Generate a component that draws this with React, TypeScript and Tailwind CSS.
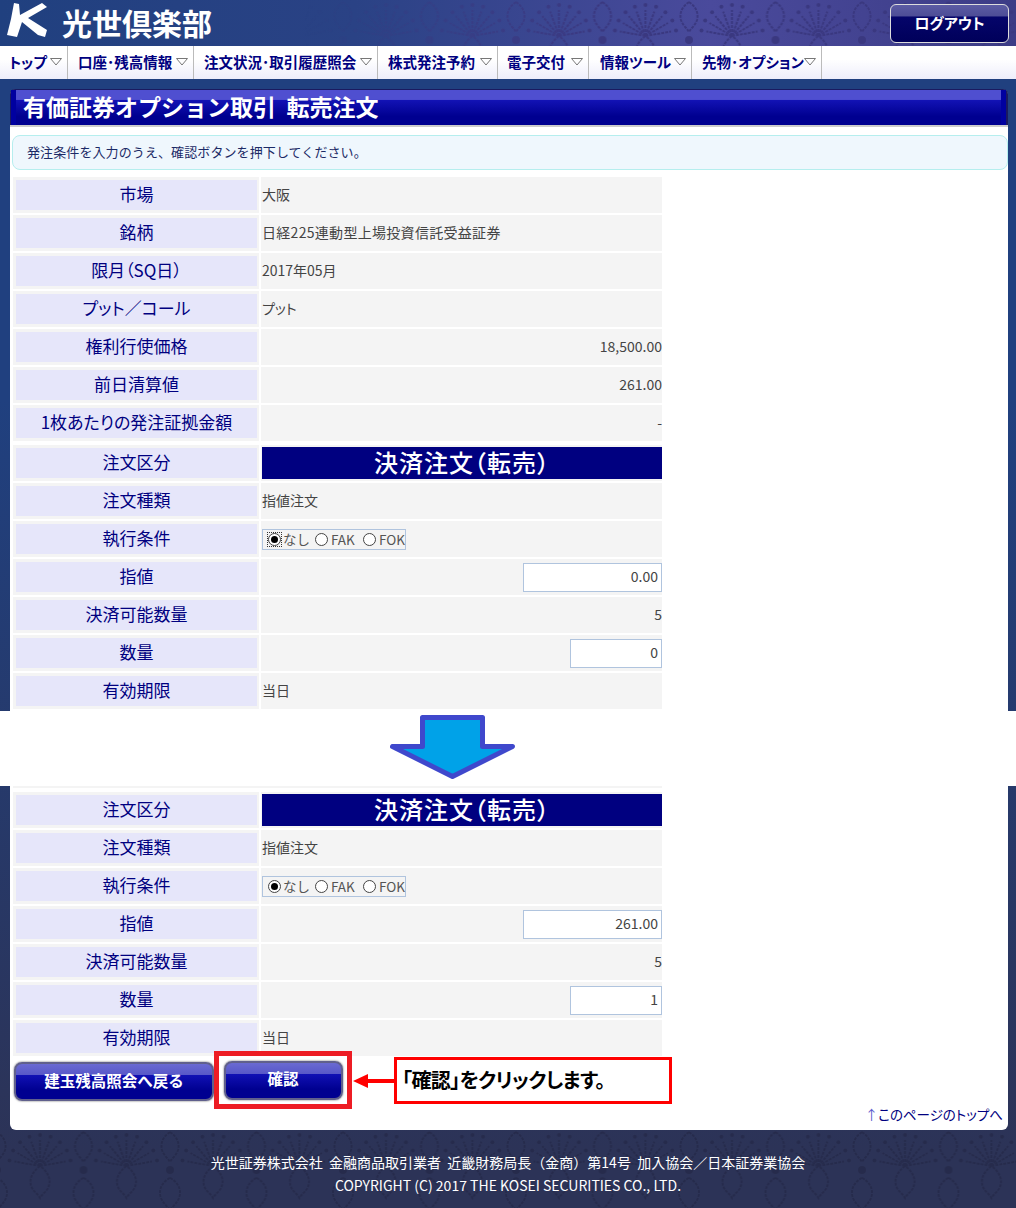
const font = { fontFamily: '"Noto Sans CJK JP", "Noto Sans", sans-serif' };

const navItems = [
  { label: "トップ", box: "w-[67px] pl-[8px]" },
  { label: "口座･残高情報", box: "w-[126px] pl-[10px]" },
  { label: "注文状況･取引履歴照会", box: "w-[184px] pl-[10px]" },
  { label: "株式発注予約", box: "w-[120px] pl-[10px]" },
  { label: "電子交付", box: "w-[91px] pl-[9px]" },
  { label: "情報ツール", box: "w-[103px] pl-[11px]" },
  { label: "先物･オプション", box: "w-[130px] pl-[10px]" },
];

// fan of the wallpaper, spokes radiate from the base of the fan
const spokes = [-80, -60, -40, -20, 0, 20, 40, 60, 80].map((deg) => {
  const r = (deg * Math.PI) / 180;
  return { x: 26 * Math.sin(r), y: 26 * Math.cos(r), dx: 31 * Math.sin(r), dy: 31 * Math.cos(r) };
});

function Damask({ id, color }: { id: string; color: string }) {
  return (
    <svg className="absolute inset-0 w-full h-full" aria-hidden="true">
      <defs>
        <pattern id={id} width="86.5" height="92" patternUnits="userSpaceOnUse" x="-3" y="-8">
          <g fill="none" stroke={color} strokeWidth="2" strokeDasharray="3 1">
            {spokes.map((s) => (
              <path key={s.dx} d={`M43 44 L${43 + s.x} ${44 - s.y}`} />
            ))}
            <path d="M43 44c-8 6-12 14-8 22 2 4 6 6 8 10 2-4 6-6 8-10 4-8 0-16-8-22z" />
            <path d="M0 10c6 4 10 10 8 18-2 6-6 8-8 12M86.5 10c-6 4-10 10-8 18 2 6 6 8 8 12" />
            <path d="M0 56c8 4 12 12 9 20-2 5-6 8-9 12M86.5 56c-8 4-12 12-9 20 2 5 6 8 9 12" />
          </g>
          <g fill={color}>
            {spokes.map((s) => (
              <circle key={s.dy} cx={43 + s.dx} cy={44 - s.dy} r="2" />
            ))}
            <circle cx="0" cy="48" r="4" />
            <circle cx="86.5" cy="48" r="4" />
          </g>
        </pattern>
      </defs>
      <rect width="100%" height="100%" fill={`url(#${id})`} />
    </svg>
  );
}

function Row({ label, children, right, className = "" }: { label: string; children: React.ReactNode; right?: boolean; className?: string }) {
  return (
    <div className={`flex h-[36px] w-[649px] ${className}`}>
      <div className="w-[246px] bg-[#f4f4f4] flex items-center pl-[3px] pr-[2px]">
        <div className="w-full h-[30px] pb-[2px] bg-[#e6e6fa] flex items-center justify-center text-[17px] text-[#000080] [font-feature-settings:'palt']">{label}</div>
      </div>
      <div className={`ml-[2px] w-[401px] bg-[#f4f4f4] flex items-center text-[14px] text-[#444] ${right ? "justify-end" : ""}`}>
        {children}
      </div>
    </div>
  );
}

function Radio({ checked, focus }: { checked?: boolean; focus?: boolean }) {
  return (
    <span className={`w-[15px] h-[15px] flex items-center justify-center ${focus ? "outline-1 outline-dotted outline-[#333] -outline-offset-1" : ""}`}>
      <span className="w-[13px] h-[13px] rounded-full border border-[#444] bg-white flex items-center justify-center">
        {checked && <span className="w-[7px] h-[7px] rounded-full bg-black" />}
      </span>
    </span>
  );
}

function RadioGroup({ focus }: { focus?: boolean }) {
  return (
    <div className="ml-[1px] w-[144px] h-[21px] border border-[#b0c4de] flex items-center pl-[4px] text-[13.5px] text-[#555] whitespace-nowrap">
      <Radio checked focus={focus} />
      <span className="ml-[1px] w-[31px]">なし</span>
      <Radio />
      <span className="ml-[2px] w-[31px]">FAK</span>
      <Radio />
      <span className="ml-[2px]">FOK</span>
    </div>
  );
}

function TextBox({ value, width }: { value: string; width: string }) {
  return (
    <input
      readOnly
      value={value}
      className={`${width} h-[29px] pb-[2px] border border-[#b0c4de] bg-white text-right text-[14px] text-[#444] pr-[3px] outline-none`}
      style={font}
    />
  );
}

function OrderBand() {
  return (
    <div className="w-[400px] h-[32px] pb-[2px] bg-[#000080] flex items-center justify-center text-white font-medium text-[24px] ml-[1px] leading-none tracking-[1px] [font-feature-settings:'palt']">
      決済注文（転売）
    </div>
  );
}

function Val({ children, className = "" }: { children: React.ReactNode; className?: string }) {
  return <span className={`pb-[2px] ${className}`}>{children}</span>;
}

function OrderRows({ limit, qty, focus }: { limit: string; qty: string; focus?: boolean }) {
  return (
    <>
      <Row label="注文区分" className="mb-[2px]"><OrderBand /></Row>
      <Row label="注文種類" className="mb-[2px]"><Val className="ml-[1px]">指値注文</Val></Row>
      <Row label="執行条件" className="mb-[2px]"><RadioGroup focus={focus} /></Row>
      <Row label="指値" right className="mb-[2px]"><TextBox value={limit} width="w-[139px]" /></Row>
      <Row label="決済可能数量" right className="mb-[2px]"><Val>5</Val></Row>
      <Row label="数量" right className="mb-[2px]"><TextBox value={qty} width="w-[92px]" /></Row>
      <Row label="有効期限"><Val className="ml-[1px]">当日</Val></Row>
    </>
  );
}

function BlueButton({ label, width }: { label: string; width: string }) {
  return (
    <button
      type="button"
      className={`${width} h-[39px] pb-[2px] rounded-[8px] border-2 border-[#60608c] shadow-[0_0_2px_#555] text-white font-bold text-[15.5px] bg-[linear-gradient(#6a6ad2_0,#5858c8_30%,#1010b4_32%,#000090_75%,#000090_100%)]`}
    >
      {label}
    </button>
  );
}

export default function App() {
  return (
    <div className="w-[1016px] h-[1208px] overflow-hidden flex flex-col bg-[linear-gradient(#20407f_0,#20407f_400px,#2c3357_1150px)]" style={font}>
      <header className="relative h-[46px] shrink-0 overflow-hidden bg-[linear-gradient(90deg,#20407f_0,#2a4285_35%,#4a4a9c_70%,#3c3c86_100%)]">
        <div className="absolute inset-0 [mask-image:linear-gradient(90deg,transparent_30%,#000_60%)]">
          <Damask id="top" color="#3a3880" />
        </div>
        <div className="relative flex items-center h-full pl-[7px] pr-[7px]">
          <svg width="40" height="34" viewBox="0 0 40 34" className="shrink-0 mb-[6px]" aria-hidden="true">
            <path fill="#fff" d="M7 0 12 1 13 12 35 0 40 4 21 15 40 27 38 34 31 32 15 19 10 34 0 32 4 16Z" />
          </svg>
          <span className="ml-[15px] mb-[2px] text-white font-bold text-[30px] leading-none whitespace-nowrap">光世倶楽部</span>
          <button
            type="button"
            className="ml-auto w-[119px] h-[39px] rounded-[6px] border border-[#ddd] text-white font-bold text-[15px] bg-[linear-gradient(#5c5ca4_0,#4d4d96_30%,#05056a_32%,#00005a_100%)] [font-feature-settings:'palt']"
          >
            ログアウト
          </button>
        </div>
      </header>

      <nav className="h-[33px] shrink-0 flex bg-[linear-gradient(#ffffff_0,#ffffff_40%,#eeeefb_100%)] pl-[1px]">
        {navItems.map((item) => (
          <div key={item.label} className={`flex items-center h-full border-r border-[#bbbbbb] pr-[5px] pb-[1px] ${item.box}`}>
            <span className="font-bold text-[14.5px] text-[#000080] whitespace-nowrap [font-feature-settings:'palt']">{item.label}</span>
            <svg width="12" height="8" viewBox="0 0 12 8" className="ml-auto" aria-hidden="true">
              <path d="M0.5 0.5H11.5L6 7Z" fill="none" stroke="#777" />
            </svg>
          </div>
        ))}
      </nav>

      <main className="mt-[10px] mx-[10px] w-[998px] h-[622px] shrink-0 bg-white rounded-t-[6px]">
        <div className="h-[38px] rounded-t-[5px] border-b-2 border-[#cccccc] bg-[#1a1a60] pt-[1px] pl-[1px] pr-[2px]">
          <div className="relative h-[35px] flex items-center pl-[12px] pb-[2px] bg-[linear-gradient(#4f4fd0_0,#4f4fd0_27%,#1212b4_30%,#000090_75%,#000090_100%)]">
            <div className="absolute left-0 inset-y-0 w-[5px] bg-[#0000a0]" />
            <div className="absolute right-0 inset-y-0 w-[5px] bg-[#0000a0]" />
            <h1 className="relative text-white font-bold text-[23px] whitespace-nowrap">有価証券オプション取引&nbsp;&nbsp;転売注文</h1>
          </div>
        </div>
        <div className="mt-[8px] ml-[2px] h-[35px] pb-[2px] rounded-[8px] border border-[#b5eeee] bg-[#eff7fd] flex items-center pl-[14px] text-[13px] tracking-[0.1px] text-[#1b2a66]">
          発注条件を入力のうえ、確認ボタンを押下してください。
        </div>
        <div className="mt-[7px] ml-[3px] flex flex-col">
          <Row label="市場" className="mb-[2px]"><Val className="ml-[1px]">大阪</Val></Row>
          <Row label="銘柄" className="mb-[2px]"><Val className="ml-[1px] tracking-[0.3px]">日経225連動型上場投資信託受益証券</Val></Row>
          <Row label="限月（SQ日）" className="mb-[2px]"><Val className="ml-[1px]">2017年05月</Val></Row>
          <Row label="プット／コール" className="mb-[2px]"><Val className="ml-[1px] [font-feature-settings:'palt']">プット</Val></Row>
          <Row label="権利行使価格" right className="mb-[2px]"><Val>18,500.00</Val></Row>
          <Row label="前日清算値" right className="mb-[2px]"><Val>261.00</Val></Row>
          <Row label="1枚あたりの発注証拠金額" right className="mb-[4px]"><Val>-</Val></Row>
          <OrderRows limit="0.00" qty="0" focus />
        </div>
      </main>

      <section className="h-[75px] shrink-0 bg-white flex justify-center">
        <svg width="126" height="66" viewBox="0 0 126 66" className="mt-[3px] mr-[110px] shrink-0" aria-hidden="true">
          <path
            d="M32.5 3.5H92.5V32.5H122.5L62.5 62.5L2.5 32.5H32.5Z"
            fill="#00a2e8"
            stroke="#3f48cc"
            strokeWidth="5"
            strokeLinejoin="round"
          />
        </svg>
      </section>

      <main className="mx-[10px] w-[998px] h-[344px] shrink-0 bg-white rounded-b-[6px]">
        <div className="ml-[3px] w-[649px] h-[2px] bg-[#f4f4f4]" />
        <div className="mt-[4px] ml-[3px] flex flex-col">
          <OrderRows limit="261.00" qty="1" />
        </div>
        <div className="flex items-start ml-[4px] -mt-[5px]">
          <div className="mt-[11px]"><BlueButton label="建玉残高照会へ戻る" width="w-[200px]" /></div>
          <div className="border-[5px] border-[#ed1c24] w-[138px] h-[58px] flex items-center justify-center shrink-0">
            <BlueButton label="確認" width="w-[119px]" />
          </div>
          <svg width="42" height="16" viewBox="0 0 42 16" className="mt-[22px] shrink-0" aria-hidden="true">
            <path d="M1 8 16 1V6H42V10H16V15Z" fill="#ff0000" />
          </svg>
          <div className="mt-[6px] w-[278px] h-[47px] pb-[2px] border-[3px] border-[#ff0000] bg-white flex items-center pl-[5px] text-[20px] font-bold text-black tracking-[-0.6px] whitespace-nowrap [font-feature-settings:'palt']">
            「確認」をクリックします。
          </div>
        </div>
        <div className="flex justify-end pr-[5px] mt-[-1px] text-[13.5px] text-[#000080] leading-none [font-feature-settings:'palt']">
          <span className="text-[#5a5acc]">↑</span>このページのトップへ
        </div>
      </main>

      <footer className="relative flex-1 overflow-hidden">
        <Damask id="bottom" color="#262b4c" />
        <div className="relative flex flex-col items-center pt-[21px] text-white text-[14px]">
          <p className="h-[23px] leading-[23px] whitespace-nowrap">光世証券株式会社&nbsp;&nbsp;金融商品取引業者&nbsp;&nbsp;近畿財務局長（金商）第14号&nbsp;&nbsp;加入協会／日本証券業協会</p>
          <p className="h-[23px] leading-[23px] whitespace-nowrap">COPYRIGHT (C) 2017 THE KOSEI SECURITIES CO., LTD.</p>
        </div>
      </footer>
    </div>
  );
}
